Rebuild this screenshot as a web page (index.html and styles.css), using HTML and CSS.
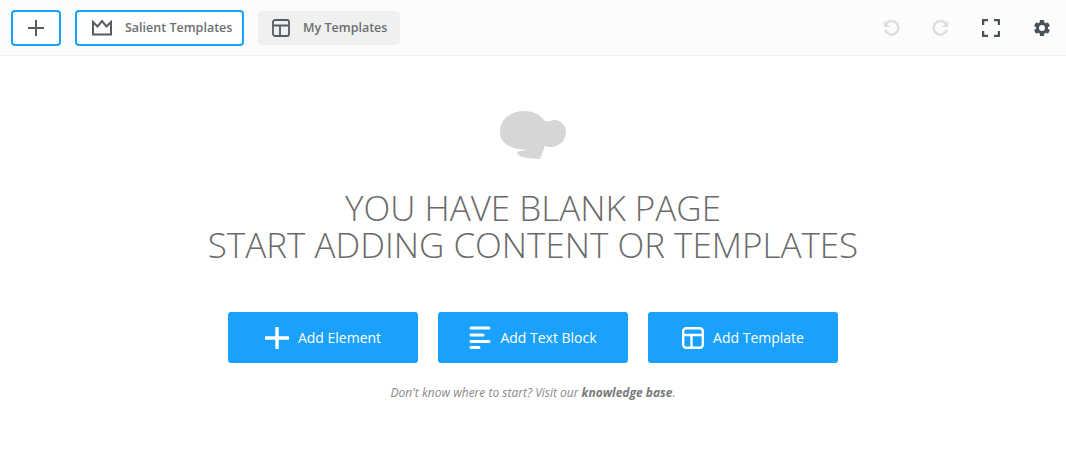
FILE: index.html
```html
<!DOCTYPE html>
<html lang="en">
<head>
  <meta charset="UTF-8" />
  <title>Page Builder</title>
  <link rel="stylesheet" href="styles.css">
</head>
<body>

  <!-- Toolbar -->
  <header class="toolbar">
    <div class="toolbar-left">
      <button class="tool-btn plus-btn" type="button">
        <svg width="18" height="18" viewBox="0 0 18 18"><path d="M9 1v16M1 9h16" stroke="#555c63" stroke-width="2" fill="none"/></svg>
      </button>
      <button class="tool-btn salient-btn" type="button">
        <svg class="crown" width="20" height="16" viewBox="0 0 20 16"><path d="M1 2l4.5 4.500L10 1l4.500 5.500L19 2v12.500H1z" stroke="#555c63" stroke-width="2" fill="none"/></svg>
        <span>Salient Templates</span>
      </button>
      <button class="tool-btn my-btn" type="button">
        <svg width="18" height="18" viewBox="0 0 18 18"><rect x="1" y="1" width="16" height="16" rx="2" stroke="#555c63" stroke-width="1.800" fill="none"/><path d="M1 6.500h16M8 6.500V17" stroke="#555c63" stroke-width="1.800" fill="none"/></svg>
        <span>My Templates</span>
      </button>
    </div>
    <div class="toolbar-right">
      <svg class="undo" width="18" height="18" viewBox="0 0 18 18"><path d="M4.200 4.600A6.800 6.800 0 1 1 3 10.500" stroke="#dcdddd" stroke-width="2.400" fill="none"/><path d="M2 2v6h6z" fill="#dcdddd"/></svg>
      <svg class="redo" width="18" height="18" viewBox="0 0 18 18"><path d="M13.800 4.600A6.800 6.800 0 1 0 15 10.500" stroke="#dcdddd" stroke-width="2.400" fill="none"/><path d="M16 2v6h-6z" fill="#dcdddd"/></svg>
      <svg class="full" width="18" height="18" viewBox="0 0 18 18"><path d="M1 6V1h5M12 1h5v5M17 12v5h-5M6 17H1v-5" stroke="#49525a" stroke-width="2.400" fill="none"/></svg>
      <svg class="gear" width="20" height="20" viewBox="0 0 24 24"><path fill="#49525a" d="M19.140 12.940c.04-.3.060-.61.060-.94 0-.32-.02-.64-.07-.94l2.030-1.580a.49.49 0 0 0 .12-.61l-1.920-3.320a.488.488 0 0 0-.59-.22l-2.390.96c-.5-.38-1.030-.7-1.620-.94l-.36-2.540a.484.484 0 0 0-.48-.41h-3.840c-.24 0-.43.170-.47.410l-.36 2.540c-.59.240-1.130.570-1.620.94l-2.390-.96c-.22-.08-.47 0-.59.220L2.740 8.870c-.12.210-.08.470.12.610l2.030 1.580c-.05.300-.09.630-.09.940s.020.640.070.940l-2.030 1.580a.49.49 0 0 0-.12.610l1.920 3.320c.12.220.370.290.590.220l2.390-.96c.5.380 1.030.7 1.620.94l.36 2.540c.05.240.24.410.48.410h3.840c.24 0 .44-.17.470-.41l.36-2.540c.59-.24 1.130-.56 1.620-.94l2.390.96c.22.080.47 0 .59-.22l1.920-3.320c.12-.22.070-.47-.12-.61l-2.010-1.580zM12 15.600A3.600 3.600 0 1 1 12 8.400a3.600 3.600 0 0 1 0 7.200z"/></svg>
    </div>
  </header>

  <!-- Pagina en blanco -->
  <main class="blank">
    <svg class="hat" width="68" height="52" viewBox="0 0 68 52">
      <path fill="#d6d6d6" d="M1 24C1 11 12 3 25 3c10 0 16 4 21 10 3 1 5 0 8-1 8-1 13 6 13 12 0 8-6 14-14 15-3 0-6-.5-7-1l-5 13c-8-.5-16-1-20-3-2-1-3-3-3-4 3-1 7-1.500 10-3-12 2-27-4-27-17z"/>
    </svg>
    <h1 class="title">YOU HAVE BLANK PAGE<br>START ADDING CONTENT OR TEMPLATES</h1>
    <div class="actions">
      <button class="action-btn" type="button">
        <svg width="24" height="22" viewBox="0 0 24 22"><path d="M12 1v20M1 11h22" stroke="#fff" stroke-width="3.400" stroke-linecap="round" fill="none"/></svg>
        <span>Add Element</span>
      </button>
      <button class="action-btn" type="button">
        <svg width="22" height="23" viewBox="0 0 22 23"><path d="M2 2h18M2 9h12M2 15.500h18M2 21.500h8" stroke="#fff" stroke-width="3" stroke-linecap="round" fill="none"/></svg>
        <span>Add Text Block</span>
      </button>
      <button class="action-btn" type="button">
        <svg width="22" height="22" viewBox="0 0 22 22"><rect x="1.200" y="1.200" width="19.600" height="19.600" rx="3" stroke="#fff" stroke-width="2.400" fill="none"/><path d="M1.200 8h19.600M9.500 8v12.800" stroke="#fff" stroke-width="2.400" fill="none"/></svg>
        <span>Add Template</span>
      </button>
    </div>
    <p class="hint">Don't know where to start? Visit our <b>knowledge base</b>.</p>
  </main>

</body>
</html>
```

FILE: styles.css
```css
body {
  margin: 0;
  font-family: 'Open Sans', sans-serif;
  background: #ffffff;
}

button {
  font-family: 'Open Sans', sans-serif;
  cursor: pointer;
}

.toolbar {
  height: 56px;
  box-sizing: border-box;
  background: #fcfcfc;
  border-bottom: 1px solid #f1f1f1;
  display: flex;
  align-items: center;
  justify-content: space-between;
  padding: 0 14px 0 11px;
}

.toolbar-left {
  display: flex;
  align-items: center;
}

.toolbar-right {
  display: flex;
  align-items: center;
  gap: 32px;
}

.tool-btn {
  height: 36px;
  box-sizing: border-box;
  display: flex;
  align-items: center;
  font-size: 12.500px;
  font-weight: 600;
  color: #6b6f73;
  background: #ffffff;
  border: 2px solid #1aa1fb;
  border-radius: 4px;
  padding: 0;
}

.plus-btn {
  width: 50px;
  justify-content: center;
  margin-right: 14px;
}

.salient-btn {
  width: 169px;
  padding-left: 15px;
  gap: 13px;
  margin-right: 14px;
}

.my-btn {
  height: 34px;
  width: 142px;
  padding-left: 14px;
  gap: 13px;
  background: #f0f0f0;
  border: none;
}

.blank {
  display: flex;
  flex-direction: column;
  align-items: center;
}

.hat {
  margin-top: 52px;
}

.title {
  margin: 29px 0 0;
  font-size: 35px;
  line-height: 37px;
  font-weight: 300;
  color: #6a6a6a;
  text-align: center;
}

.actions {
  display: flex;
  gap: 20px;
  margin-top: 49px;
}

.action-btn {
  width: 190px;
  height: 51px;
  display: flex;
  align-items: center;
  justify-content: center;
  gap: 9px;
  background: #1aa1fb;
  color: #ffffff;
  font-size: 14px;
  font-weight: 400;
  border: none;
  border-radius: 3px;
  padding: 0;
}

.hint {
  margin: 21px 0 0;
  font-size: 12px;
  font-style: italic;
  color: #8a8a8a;
}

.hint b {
  font-weight: 700;
  color: #7a7a7a;
}
```
